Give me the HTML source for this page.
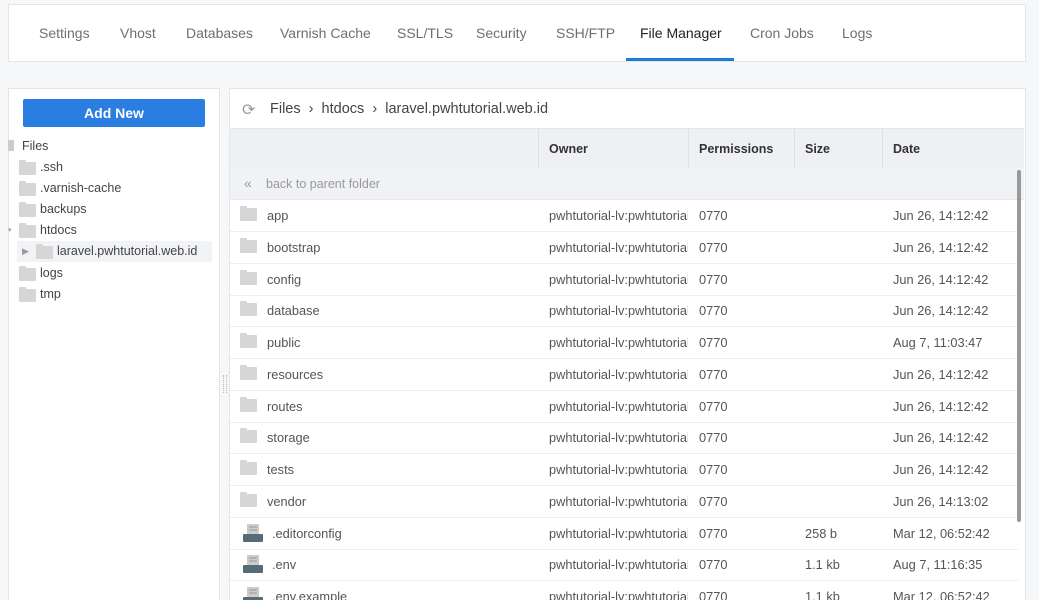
<!DOCTYPE html>
<html><head><style>
html,body{margin:0;width:1039px;height:600px;overflow:hidden}
body{background:#f6f7f9;font-family:"Liberation Sans",sans-serif;position:relative}
.a{position:absolute;white-space:nowrap}
.tabs{left:8px;top:4px;width:1016px;height:56px;background:#fff;border:1px solid #e3e5e8}
.tab{top:25px;font-size:14px;color:#6b6f75}
.left{left:8px;top:88px;width:210px;height:520px;background:#fff;border:1px solid #e3e5e8}
.right{left:229px;top:88px;width:795px;height:520px;background:#fff;border:1px solid #e3e5e8}
.fold{display:inline-block;width:17px;height:13px;background:#d6d6d6;border-radius:1px;position:relative}
.fold:before{content:"";position:absolute;left:0;top:-2px;width:7px;height:3px;background:#d6d6d6;border-radius:1px 1px 0 0}
.tree{font-size:12.5px;color:#444}
.row{left:230px;width:788px;height:31px;border-bottom:1px solid #eceef1;font-size:12.8px;color:#555}
.row span{position:absolute;top:8px}
.row span.o{left:319px;width:139px;overflow:hidden}
.hdr{font-size:12.5px;font-weight:bold;color:#333}
</style></head><body>
<div class="a tabs"></div>
<div class="a tab" style="left:39px">Settings</div>
<div class="a tab" style="left:120px">Vhost</div>
<div class="a tab" style="left:186px">Databases</div>
<div class="a tab" style="left:280px">Varnish Cache</div>
<div class="a tab" style="left:397px">SSL/TLS</div>
<div class="a tab" style="left:476px">Security</div>
<div class="a tab" style="left:556px">SSH/FTP</div>
<div class="a tab" style="left:640px;color:#222">File Manager</div>
<div class="a tab" style="left:750px">Cron Jobs</div>
<div class="a tab" style="left:842px">Logs</div>
<div class="a" style="left:626px;top:58px;width:108px;height:3px;background:#1a7ddc"></div>

<div class="a left"></div>
<div class="a" style="left:23px;top:99px;width:182px;height:28px;background:#2a7de1;border-radius:2px;color:#fff;font-weight:bold;font-size:14px;text-align:center;line-height:28px">Add New</div>
<div class="a" style="left:8px;top:140px;width:6px;height:11px;background:#ccc"></div>
<div class="a tree" style="left:22px;top:139px">Files</div>
<div class="a" style="left:19px;top:162px"><span class="fold"></span></div><div class="a tree" style="left:40px;top:160px">.ssh</div>
<div class="a" style="left:19px;top:183px"><span class="fold"></span></div><div class="a tree" style="left:40px;top:181px">.varnish-cache</div>
<div class="a" style="left:19px;top:204px"><span class="fold"></span></div><div class="a tree" style="left:40px;top:202px">backups</div>
<div class="a" style="left:8px;top:226px;font-size:7px;color:#999">▾</div>
<div class="a" style="left:19px;top:225px"><span class="fold"></span></div><div class="a tree" style="left:40px;top:223px">htdocs</div>
<div class="a" style="left:17px;top:241px;width:195px;height:21px;background:#f1f3f6"></div>
<div class="a" style="left:22px;top:246px;font-size:9px;color:#999">▶</div>
<div class="a" style="left:36px;top:246px"><span class="fold"></span></div><div class="a tree" style="left:57px;top:244px">laravel.pwhtutorial.web.id</div>
<div class="a" style="left:19px;top:268px"><span class="fold"></span></div><div class="a tree" style="left:40px;top:266px">logs</div>
<div class="a" style="left:19px;top:289px"><span class="fold"></span></div><div class="a tree" style="left:40px;top:287px">tmp</div>
<div class="a" style="left:223px;top:375px;width:2px;height:18px;border-left:1px dotted #bbb;border-right:1px dotted #bbb"></div>

<div class="a right"></div>
<div class="a" style="left:242px;top:100px;font-size:16px;color:#999">⟳</div>
<div class="a" style="left:270px;top:101px;font-size:14.5px;color:#444">Files &nbsp;›&nbsp; htdocs &nbsp;›&nbsp; laravel.pwhtutorial.web.id</div>
<div class="a" style="left:230px;top:128px;width:794px;height:39px;background:#eef0f4;border-top:1px solid #e3e5e8;border-bottom:1px solid #e3e5e8"></div>
<div class="a" style="left:538px;top:129px;width:1px;height:39px;background:#dde0e5"></div>
<div class="a" style="left:688px;top:129px;width:1px;height:39px;background:#dde0e5"></div>
<div class="a" style="left:794px;top:129px;width:1px;height:39px;background:#dde0e5"></div>
<div class="a" style="left:882px;top:129px;width:1px;height:39px;background:#dde0e5"></div>
<div class="a hdr" style="left:549px;top:142px">Owner</div>
<div class="a hdr" style="left:699px;top:142px">Permissions</div>
<div class="a hdr" style="left:805px;top:142px">Size</div>
<div class="a hdr" style="left:893px;top:142px">Date</div>
<div class="a" style="left:230px;top:168px;width:794px;height:31px;background:#f1f2f5;border-bottom:1px solid #e6e8ec"></div>
<div class="a" style="left:244px;top:175px;font-size:14px;color:#999">«</div>
<div class="a" style="left:266px;top:177px;font-size:12.5px;color:#999">back to parent folder</div>

<div style="position:absolute;left:0;top:200px">
<div class="a row" style="top:0"><span style="left:10px;top:8px"><i class="fold"></i></span><span style="left:37px">app</span><span class="o">pwhtutorial-lv:pwhtutorial</span><span style="left:469px">0770</span><span style="left:663px">Jun 26, 14:12:42</span></div>
<div class="a row" style="top:31.75px"><span style="left:10px;top:8px"><i class="fold"></i></span><span style="left:37px">bootstrap</span><span class="o">pwhtutorial-lv:pwhtutorial</span><span style="left:469px">0770</span><span style="left:663px">Jun 26, 14:12:42</span></div>
<div class="a row" style="top:63.5px"><span style="left:10px;top:8px"><i class="fold"></i></span><span style="left:37px">config</span><span class="o">pwhtutorial-lv:pwhtutorial</span><span style="left:469px">0770</span><span style="left:663px">Jun 26, 14:12:42</span></div>
<div class="a row" style="top:95.25px"><span style="left:10px;top:8px"><i class="fold"></i></span><span style="left:37px">database</span><span class="o">pwhtutorial-lv:pwhtutorial</span><span style="left:469px">0770</span><span style="left:663px">Jun 26, 14:12:42</span></div>
<div class="a row" style="top:127px"><span style="left:10px;top:8px"><i class="fold"></i></span><span style="left:37px">public</span><span class="o">pwhtutorial-lv:pwhtutorial</span><span style="left:469px">0770</span><span style="left:663px">Aug 7, 11:03:47</span></div>
<div class="a row" style="top:158.75px"><span style="left:10px;top:8px"><i class="fold"></i></span><span style="left:37px">resources</span><span class="o">pwhtutorial-lv:pwhtutorial</span><span style="left:469px">0770</span><span style="left:663px">Jun 26, 14:12:42</span></div>
<div class="a row" style="top:190.5px"><span style="left:10px;top:8px"><i class="fold"></i></span><span style="left:37px">routes</span><span class="o">pwhtutorial-lv:pwhtutorial</span><span style="left:469px">0770</span><span style="left:663px">Jun 26, 14:12:42</span></div>
<div class="a row" style="top:222.25px"><span style="left:10px;top:8px"><i class="fold"></i></span><span style="left:37px">storage</span><span class="o">pwhtutorial-lv:pwhtutorial</span><span style="left:469px">0770</span><span style="left:663px">Jun 26, 14:12:42</span></div>
<div class="a row" style="top:254px"><span style="left:10px;top:8px"><i class="fold"></i></span><span style="left:37px">tests</span><span class="o">pwhtutorial-lv:pwhtutorial</span><span style="left:469px">0770</span><span style="left:663px">Jun 26, 14:12:42</span></div>
<div class="a row" style="top:285.75px"><span style="left:10px;top:8px"><i class="fold"></i></span><span style="left:37px">vendor</span><span class="o">pwhtutorial-lv:pwhtutorial</span><span style="left:469px">0770</span><span style="left:663px">Jun 26, 14:13:02</span></div>
<div class="a row" style="top:317.5px"><span style="left:12px;top:5px"><svg width="22" height="20"><rect x="5" y="1" width="12" height="10" fill="#ccc"/><path d="M7 4h8M7 7h8" stroke="#999"/><rect x="1" y="11" width="20" height="8" rx="1" fill="#556b78"/></svg></span><span style="left:42px">.editorconfig</span><span class="o">pwhtutorial-lv:pwhtutorial</span><span style="left:469px">0770</span><span style="left:575px">258 b</span><span style="left:663px">Mar 12, 06:52:42</span></div>
<div class="a row" style="top:349.25px"><span style="left:12px;top:5px"><svg width="22" height="20"><rect x="5" y="1" width="12" height="10" fill="#ccc"/><path d="M7 4h8M7 7h8" stroke="#999"/><rect x="1" y="11" width="20" height="8" rx="1" fill="#556b78"/></svg></span><span style="left:42px">.env</span><span class="o">pwhtutorial-lv:pwhtutorial</span><span style="left:469px">0770</span><span style="left:575px">1.1 kb</span><span style="left:663px">Aug 7, 11:16:35</span></div>
<div class="a row" style="top:381px"><span style="left:12px;top:5px"><svg width="22" height="20"><rect x="5" y="1" width="12" height="10" fill="#ccc"/><path d="M7 4h8M7 7h8" stroke="#999"/><rect x="1" y="11" width="20" height="8" rx="1" fill="#556b78"/></svg></span><span style="left:42px">.env.example</span><span class="o">pwhtutorial-lv:pwhtutorial</span><span style="left:469px">0770</span><span style="left:575px">1.1 kb</span><span style="left:663px">Mar 12, 06:52:42</span></div>
</div>
<div class="a" style="left:1017px;top:170px;width:4px;height:352px;background:#999;border-radius:2px"></div>
</body></html>
